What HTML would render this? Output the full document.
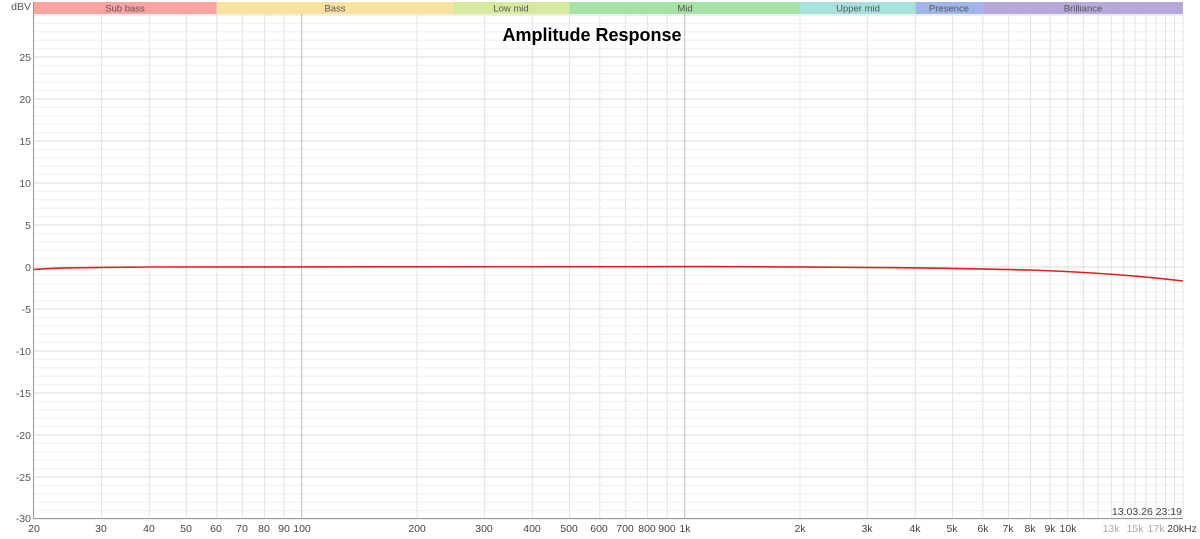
<!DOCTYPE html>
<html><head><meta charset="utf-8"><style>
html,body{margin:0;padding:0;background:#fff;width:1200px;height:539px;overflow:hidden}
svg{display:block;font-family:"Liberation Sans",sans-serif}
</style></head><body>
<svg id="s" width="1200" height="539" viewBox="0 0 1200 539">
<g id="grid"></g>
<g font-size="9.5" fill="#555" text-anchor="middle">
<rect x="34" y="2" width="182.7" height="12" fill="#fba3a3"/><text x="125" y="11.5">Sub bass</text>
<rect x="216.7" y="2" width="237" height="12" fill="#f9e19f"/><text x="335" y="11.5">Bass</text>
<rect x="453.7" y="2" width="115.7" height="12" fill="#d6ea9f"/><text x="511" y="11.5">Low mid</text>
<rect x="569.4" y="2" width="230.6" height="12" fill="#a6e1a6"/><text x="685" y="11.5">Mid</text>
<rect x="800" y="2" width="115.3" height="12" fill="#a6e1dc"/><text x="858" y="11.5">Upper mid</text>
<rect x="915.3" y="2" width="67.4" height="12" fill="#a1b5ea"/><text x="949" y="11.5">Presence</text>
<rect x="982.7" y="2" width="200.3" height="12" fill="#b9a9d9"/><text x="1083" y="11.5">Brilliance</text>
</g>
<text x="592" y="41" font-size="18" font-weight="bold" text-anchor="middle" fill="#000">Amplitude Response</text>
<g font-size="10.5" fill="#555" text-anchor="end">
<text x="31" y="10">dBV</text>
<text x="31" y="61">25</text><text x="31" y="103">20</text><text x="31" y="145">15</text><text x="31" y="187">10</text>
<text x="31" y="229">5</text><text x="31" y="271">0</text><text x="31" y="313">-5</text><text x="31" y="355">-10</text>
<text x="31" y="397">-15</text><text x="31" y="439">-20</text><text x="31" y="481">-25</text><text x="31" y="522">-30</text>
</g>
<g font-size="10.5" fill="#444" text-anchor="middle">
<text x="34" y="532">20</text><text x="101" y="532">30</text><text x="149" y="532">40</text><text x="186" y="532">50</text>
<text x="216" y="532">60</text><text x="242" y="532">70</text><text x="264" y="532">80</text><text x="284" y="532">90</text>
<text x="302" y="532">100</text><text x="417" y="532">200</text><text x="484" y="532">300</text><text x="532" y="532">400</text>
<text x="569" y="532">500</text><text x="599" y="532">600</text><text x="625" y="532">700</text><text x="647" y="532">800</text>
<text x="667" y="532">900</text><text x="685" y="532">1k</text><text x="800" y="532">2k</text><text x="867" y="532">3k</text>
<text x="915" y="532">4k</text><text x="952" y="532">5k</text><text x="983" y="532">6k</text><text x="1008" y="532">7k</text>
<text x="1030" y="532">8k</text><text x="1050" y="532">9k</text><text x="1068" y="532">10k</text>
<text x="1111" y="532" fill="#aaa">13k</text><text x="1135" y="532" fill="#aaa">15k</text><text x="1156" y="532" fill="#aaa">17k</text>
<text x="1182" y="532">20kHz</text>
</g>
<text x="1182" y="515" font-size="10.5" fill="#444" text-anchor="end">13.03.26 23:19</text>
<path d="M34,269.5 C60,267.5 90,267.5 150,267 L700,266.6 C900,267 960,268.5 1030,270 C1100,272.5 1150,277 1183,281" fill="none" stroke="#e02020" stroke-width="1.6"/>
</svg>
<script>
var g=document.getElementById('grid'),h='';
function X(f){return 34+383*Math.log10(f/20);}
for(var d=-30;d<=30;d++){var y=267-d*8.4;var c=d%5==0?'#ddd':'#f0f0f0';h+='<line x1="34" x2="1183" y1="'+y+'" y2="'+y+'" stroke="'+c+'"/>';}
var fs=[];for(var f=30;f<=100;f+=10)fs.push(f);for(f=200;f<=1000;f+=100)fs.push(f);for(f=2000;f<=10000;f+=1000)fs.push(f);for(f=11000;f<=20000;f+=1000)fs.push(f);
fs.forEach(function(f){var x=X(f);var c=(f==100||f==1000)?'#bbb':'#e4e4e4';h+='<line x1="'+x+'" x2="'+x+'" y1="14" y2="519" stroke="'+c+'"/>';});
h+='<line x1="33.5" x2="33.5" y1="2" y2="519" stroke="#999"/><line x1="34" x2="1183" y1="518.5" y2="518.5" stroke="#999"/>';
g.innerHTML=h;
</script>
</body></html>
